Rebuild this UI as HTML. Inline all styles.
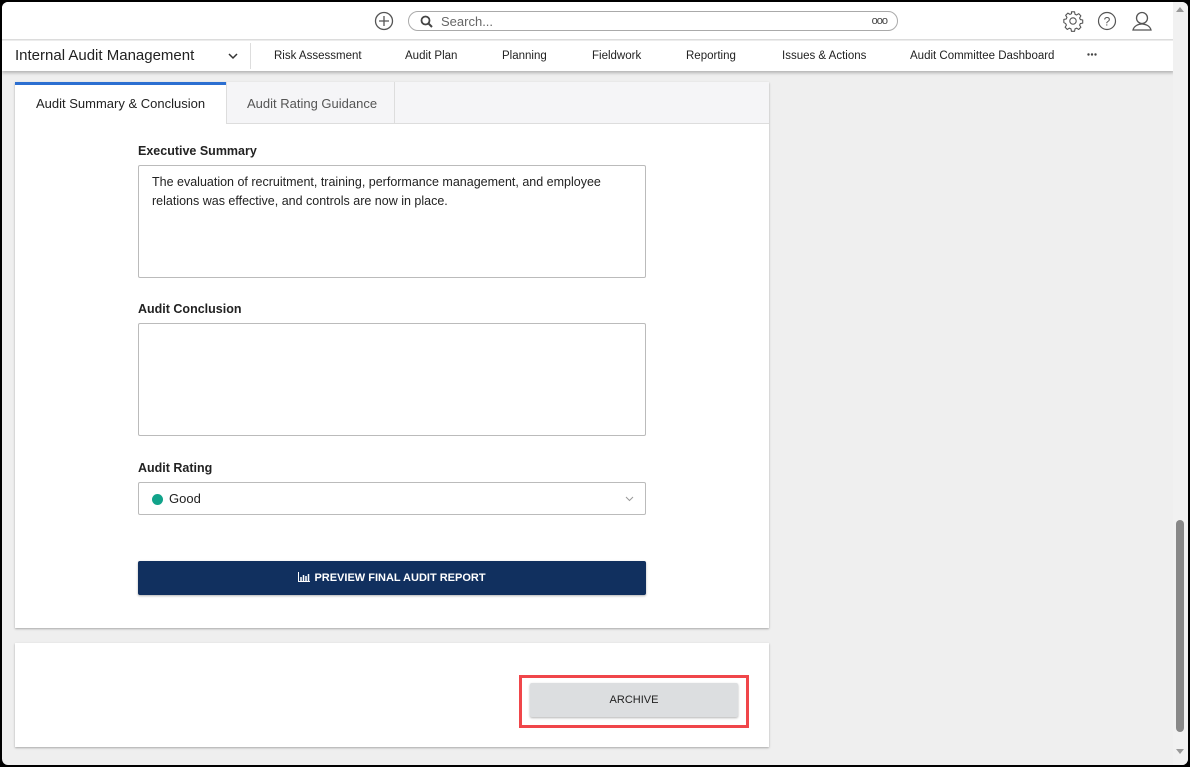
<!DOCTYPE html>
<html><head><style>
*{box-sizing:border-box;margin:0;padding:0}
body{width:1190px;height:767px;background:#000;font-family:"Liberation Sans",sans-serif;overflow:hidden;position:relative}
#win{position:absolute;left:2px;top:2px;width:1186px;height:763px;background:#efefef;border-radius:6px;overflow:hidden}
#top{position:absolute;left:0;top:0;width:1172px;height:38px;background:#fff;border-bottom:1px solid #ddd}
#nav{position:absolute;left:0;top:39px;width:1172px;height:30px;background:#fff;box-shadow:0 2px 3px rgba(0,0,0,.25)}
.nv{position:absolute;top:9px;font-size:11.5px;color:#222}
#sb{position:absolute;left:1171px;top:0;width:15px;height:763px;background:#f1f1f1}
.card{position:absolute;left:13px;width:754px;background:#fff;box-shadow:0 1px 2px rgba(0,0,0,.3)}
.lbl{position:absolute;left:136px;font-size:12.5px;color:#222;font-weight:bold}
.ta{position:absolute;left:136px;width:508px;border:1px solid #bbb;border-radius:2px;background:#fff}
</style></head><body>
<div id="win">
<div id="top">
<svg style="position:absolute;left:372px;top:9px" width="20" height="20" viewBox="0 0 20 20"><circle cx="10" cy="10" r="8.5" fill="none" stroke="#555" stroke-width="1.3"/><path d="M10 5v10M5 10h10" stroke="#555" stroke-width="1.3"/></svg>
<div style="position:absolute;left:406px;top:9px;width:490px;height:20px;border:1px solid #aaa;border-radius:10px">
<svg style="position:absolute;left:11px;top:3px" width="13" height="13" viewBox="0 0 13 13"><circle cx="5.5" cy="5.5" r="4" fill="none" stroke="#444" stroke-width="1.8"/><path d="M8.5 8.5l3.5 3.5" stroke="#444" stroke-width="2"/></svg>
<span style="position:absolute;left:32px;top:2px;font-size:13px;color:#666">Search...</span>
<span style="position:absolute;right:10px;top:3px;font-size:11px;color:#444;letter-spacing:-1px">ooo</span></div>
<svg style="position:absolute;left:1060px;top:8px" width="22" height="22" viewBox="0 0 24 24"><path d="M10.3 2h3.4l.5 2.6 1.7.8 2.3-1.4 2.4 2.4-1.4 2.3.8 1.7 2.6.5v3.4l-2.6.5-.8 1.7 1.4 2.3-2.4 2.4-2.3-1.4-1.7.8-.5 2.6h-3.4l-.5-2.6-1.7-.8-2.3 1.4-2.4-2.4 1.4-2.3-.8-1.7L2 13.7v-3.4l2.6-.5.8-1.7L4 5.8l2.4-2.4 2.3 1.4 1.7-.8z" fill="none" stroke="#555" stroke-width="1.2" stroke-linejoin="round"/><circle cx="12" cy="12" r="3.5" fill="none" stroke="#555" stroke-width="1.2"/></svg>
<svg style="position:absolute;left:1095px;top:9px" width="20" height="20" viewBox="0 0 20 20"><circle cx="10" cy="10" r="8.5" fill="none" stroke="#555" stroke-width="1.2"/><text x="10" y="14.5" font-size="12" text-anchor="middle" fill="#555" font-family="Liberation Sans">?</text></svg>
<svg style="position:absolute;left:1129px;top:8px" width="22" height="22" viewBox="0 0 22 22"><circle cx="11" cy="8" r="5.5" fill="none" stroke="#555" stroke-width="1.3"/><path d="M2 20c1-4 5-6 9-6s8 2 9 6z" fill="none" stroke="#555" stroke-width="1.3"/></svg>
</div>
<div id="nav">
<span style="position:absolute;left:13px;top:6px;font-size:15px;color:#222">Internal Audit Management</span>
<svg style="position:absolute;left:226px;top:12px" width="10" height="7" viewBox="0 0 10 7"><path d="M1 1l4 4 4-4" fill="none" stroke="#333" stroke-width="1.5"/></svg>
<div style="position:absolute;left:248px;top:2px;width:1px;height:26px;background:#ddd"></div>
<span class="nv" style="left:272px">Risk Assessment</span>
<span class="nv" style="left:403px">Audit Plan</span>
<span class="nv" style="left:500px">Planning</span>
<span class="nv" style="left:590px">Fieldwork</span>
<span class="nv" style="left:684px">Reporting</span>
<span class="nv" style="left:780px">Issues &amp; Actions</span>
<span class="nv" style="left:908px">Audit Committee Dashboard</span>
<svg style="position:absolute;left:1085px;top:12px" width="10" height="3"><circle cx="1.5" cy="1.5" r="1.2" fill="#444"/><circle cx="5" cy="1.5" r="1.2" fill="#444"/><circle cx="8.5" cy="1.5" r="1.2" fill="#444"/></svg>
</div>
<div class="card" style="top:80px;height:546px">
<div style="position:absolute;left:0;top:0;width:754px;height:42px;background:#f5f5f7;border-bottom:1px solid #ddd"></div>
<div style="position:absolute;left:0;top:0;width:211px;height:43px;background:#fff;border-top:3px solid #2c6fd1"></div>
<span style="position:absolute;left:21px;top:14px;font-size:13px;color:#222">Audit Summary &amp; Conclusion</span>
<div style="position:absolute;left:211px;top:0;width:169px;height:42px;border-left:1px solid #ddd;border-right:1px solid #ddd"></div>
<span style="position:absolute;left:232px;top:14px;font-size:13px;color:#555">Audit Rating Guidance</span>
</div>
<div class="lbl" style="top:142px">Executive Summary</div>
<div class="ta" style="top:163px;height:113px"><div style="padding:7px 13px;font-size:12.5px;line-height:19px;color:#222">The evaluation of recruitment, training, performance management, and employee relations was effective, and controls are now in place.</div></div>
<div class="lbl" style="top:300px">Audit Conclusion</div>
<div class="ta" style="top:321px;height:113px"></div>
<div class="lbl" style="top:459px">Audit Rating</div>
<div class="ta" style="top:480px;height:33px"><span style="position:absolute;left:13px;top:11px;width:11px;height:11px;border-radius:50%;background:#11a38a"></span><span style="position:absolute;left:30px;top:8px;font-size:13px;color:#222">Good</span><svg style="position:absolute;right:11px;top:13px" width="9" height="6" viewBox="0 0 9 6"><path d="M1 1l3.5 3.5L8 1" fill="none" stroke="#999" stroke-width="1"/></svg></div>
<div style="position:absolute;left:136px;top:559px;width:508px;height:34px;background:#11305f;border-radius:2px;box-shadow:0 1px 2px rgba(0,0,0,.3);color:#fff;font-size:11px;font-weight:bold;text-align:center;line-height:34px"><svg width="12" height="10" viewBox="0 0 12 10" style="vertical-align:-1px;margin-right:4px"><path d="M.5 0v9.5H12" fill="none" stroke="#fff"/><path d="M3 5v4M5.5 3v6M8 4v5M10.5 2v7" stroke="#fff" stroke-width="1.5"/></svg>PREVIEW FINAL AUDIT REPORT</div>
<div class="card" style="top:641px;height:104px"></div>
<div style="position:absolute;left:517px;top:673px;width:230px;height:53px;border:3px solid #f0464a"></div>
<div style="position:absolute;left:528px;top:681px;width:208px;height:34px;background:#dcdee0;border-radius:2px;box-shadow:0 1px 2px rgba(0,0,0,.3);font-size:11px;color:#222;text-align:center;line-height:34px">ARCHIVE</div>
<div id="sb"><div style="position:absolute;left:3px;top:518px;width:8px;height:212px;background:#888;border-radius:4px"></div>
<svg style="position:absolute;left:3px;top:4px" width="8" height="6"><path d="M0 6L4 1 8 6z" fill="#999"/></svg>
<svg style="position:absolute;left:3px;top:747px" width="8" height="6"><path d="M0 0L4 5 8 0z" fill="#999"/></svg></div>
</div>
</body></html>
